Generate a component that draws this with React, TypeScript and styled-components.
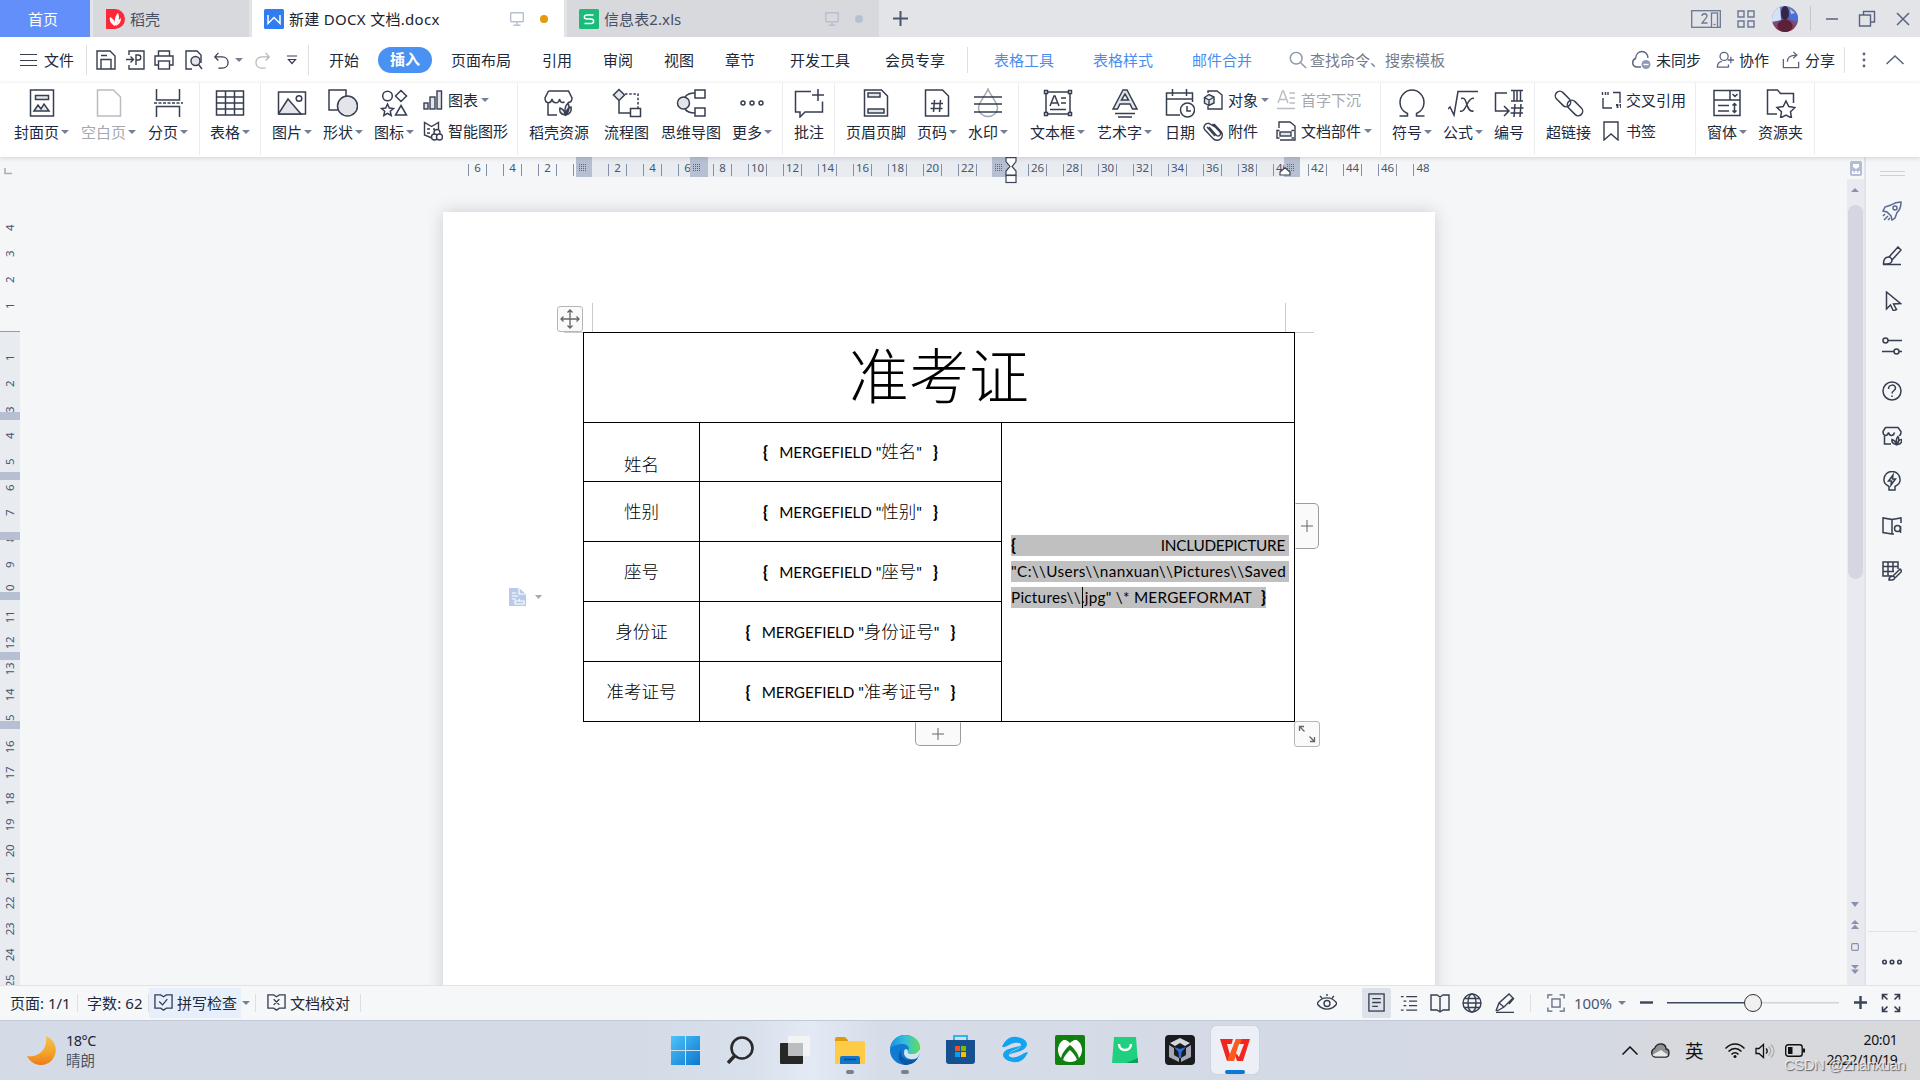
import React from "react";
import styled, { createGlobalStyle } from "styled-components";

const ui = `"Noto Sans", "Noto Sans CJK SC", sans-serif`;
const ink = "#363e50";
const soft = "#e3e5ea";

const Global = createGlobalStyle`
  * { box-sizing: border-box; }
  body { margin: 0; overflow: hidden; background: #f5f6f8; }
  svg { display: block; flex: none; }
`;

/* ---------- icons ---------- */
const leaf = (
  <g fill="#e3e5ea">
    <path d="M21 27c-5-1-6-4-5-7 3 1 5 3 5 7zM22 27c-2-5-1-9 2-12 2 4 1 8-2 12zM22 27c0-5 2-7 5-8 1 4-1 7-5 8z" />
  </g>
);
const icons: Record<string, React.ReactNode> = {
  cover: <><rect x="3.5" y="2" width="23" height="26" /><rect x="8.5" y="7.500" width="13" height="4" fill={soft} /><path d="M7 23l4-6 3 4 3-5 5 7z" fill={soft} /></>,
  blank: <path d="M3.500 2h16l7 7v19h-23z" />,
  pagebreak: <><path d="M3.500 1v11h23V1M3.500 29V18.500h23V29" /><path d="M1 15h29" strokeDasharray="3 1.500" /></>,
  table: <><rect x="1.500" y="3" width="27" height="24" /><path d="M1.500 9h27M1.500 15h27M1.500 21h27M10.500 3v24M19.500 3v24" /></>,
  picture: <><rect x="1.500" y="4" width="27" height="22" /><path d="M2 25l9-14 13 15H2z" fill={soft} /><circle cx="22" cy="10.500" r="2.800" /></>,
  shapes: <><rect x="1" y="2" width="17" height="20" /><circle cx="19.500" cy="18" r="10" fill={soft} /></>,
  glyphs: <><circle cx="8.500" cy="8" r="4.800" /><path d="M22 2.500l5.500 5.500-5.500 5.500L16.500 8zM22 17.500l5.500 9.500h-11zM8.500 16l1.800 4 4.200.5-3.200 2.800.9 4.200-3.700-2.200-3.700 2.200.9-4.200-3.200-2.800 4.200-.5z" /></>,
  shop: <><path d="M13 27H4V14M4.500 3h20l3.500 7c0 3-2 4.500-4 4.500M4.500 3L1 10c0 6 6 6 7 1 1 5 7 5 7.500 0 1 4 3 4 5 3" />{leaf}</>,
  flow: <><path d="M7 1.500l5.500 5.500L7 12.500 1.500 7z" fill={soft} /><path d="M7 13v12h11" /><path d="M13 6h13v14" strokeDasharray="2.500 1.700" /><rect x="18.500" y="20.500" width="10" height="8" fill="#fff" /></>,
  mind: <><circle cx="7.500" cy="15" r="6" fill={soft} /><rect x="19" y="2" width="10" height="8" /><rect x="19" y="20" width="10" height="8" /><path d="M9 9c2-3 5-4 10-4M9 21c2 3 5 4 10 4" /></>,
  more: <><circle cx="6" cy="15" r="2" /><circle cx="15" cy="15" r="2" /><circle cx="24" cy="15" r="2" /></>,
  comment: <path d="M17 3.500H1.500V24H6v5l5-5h17.500V13.500M24 1v12M18 7h12" />,
  header: <><path d="M3.500 2h17l6 6v20h-23z" /><rect x="7" y="5" width="12" height="4" fill={soft} /><rect x="7" y="21" width="16" height="4" fill={soft} /></>,
  pageno: <><path d="M3.500 2h17l6 6v20h-23z" /><path d="M12.500 12l-1 12M18.500 12l-1 12M9 15.500h12M8.500 20.500h12" /></>,
  watermark: <><path d="M15 1C13 7 5.500 14 5.500 20a9.500 8.500 0 0 0 19 0C24.500 14 17 7 15 1z" stroke="#a5a9b3" /><path d="M1 9h28M1 16h28M1 24h28" /></>,
  textbox: <><rect x="3" y="4" width="24" height="22" /><g fill="#fff"><rect x="1.500" y="2.500" width="3" height="3" /><rect x="25.500" y="2.500" width="3" height="3" /><rect x="1.500" y="24.500" width="3" height="3" /><rect x="25.500" y="24.500" width="3" height="3" /></g><path d="M7 18l4-10h1l4 10M8.500 15h6M18 10h5M18 15h5M7 21.500h16" /></>,
  wordart: <><path d="M3 21L13 2h4l10 19h-4.500l-2.500-5H10l-2.500 5zM11.500 12h7L15 6z" fill={soft} /><path d="M5 25.500h20M8 29h14" /></>,
  date: <><path d="M15 27H1.500V5h26v9M1.500 11h26M7.500 1v7M21.500 1v7" /><circle cx="22.500" cy="22" r="7" fill="#fff" /><path d="M22 18v5h4" /></>,
  omega: <path d="M2.500 28h8v-2.500C6 23.500 3 20 3 14.500A12 12.500 0 0 1 27 14.500c0 5.500-3 9-7.500 11V28h8" />,
  sqrt: <><path d="M0 21l2-2 4 8L10 3.500h20" /><path d="M13 10.500c3-1 4 0 5.500 5s3 8.500 7 7.500M26 10.500c-3-1-5 2-7 6s-4 8-7 6.500" /></>,
  number: <><path d="M13 5H1.500v18H14M10 18l5 5-5 5" /><path d="M17 2.500h12M17 13h12M20 2.500V13M23 2.500V13M26.500 2.500V13M21 16l-1 13M27 16l-1 13M17 20h12.500M16.500 25h12.500" /></>,
  link: <><rect x="0" y="6.500" width="18" height="9" rx="4.500" transform="rotate(45 9 11)" /><rect x="12" y="15.500" width="18" height="9" rx="4.500" transform="rotate(45 21 20)" /></>,
  form: <><rect x="2" y="2.500" width="26" height="25" /><path d="M2 12h26M18 2.500V12M20.500 6l2.500 2.500L25.500 6M6 17.500h11M6 23h11M22.500 15.500v9M20.500 17.500l2-2 2 2M20.500 22.500l2 2 2-2" /></>,
  resource: <><path d="M11 26H1.500V2h10l3 3.500h13V15" /><path d="M20 13l2.800 5.600 6.200.9-4.500 4.300 1 6.200-5.500-3-5.500 3 1-6.200-4.500-4.300 6.200-.9z" /></>,
  // small, 20 box
  chart: <g fill={soft}><rect x="1" y="13" width="4" height="6" /><rect x="7" y="7" width="5" height="12" /><rect x="14" y="1" width="4.500" height="18" /></g>,
  smart: <><path d="M9 17L1.500 14V1.500l7 4 7-4V8M4 8h3M10 8h2M4 12h3" /><circle cx="14" cy="11.500" r="3" fill="#fff" /><circle cx="11.500" cy="16" r="3" fill="#fff" /><circle cx="16.500" cy="16" r="3" fill="#fff" /></>,
  object: <><path d="M5 3V1h9l5 4v14H5v-3" /><path d="M1.500 7.500L6 4.500l5 2.500v6L6 15.500l-4.500-2.500zM1.500 7.500L6 10l5-3M6 10v5" fill={soft} /></>,
  clip: <path d="M12 6L6 2.500A4 4 0 0 0 2 9l8 8.500a5.300 5.300 0 0 0 8-7l-7-7.500M6 6l7.500 8.500a2.500 2.500 0 0 0 3.500-3.500L9.500 3M4 6l8 9" />,
  drop: <><path d="M2 13L6.500 1h1L12 13M4 9.500h6M13.500 3H19M13.500 8H19M13.500 13H19M1 18.500h18" /></>,
  parts: <><path d="M3 7V1h11l5 4v14H4" /><rect x="4" y="11" width="11" height="4" fill={soft} /><path d="M3.500 9.500H1v7.500h2.500M15.500 9.500H18M15.500 17H18" /></>,
  cross: <><path d="M2 8v10h9M12 2.500h7V13M1.500 5V2M4.500 5V2M7 5V2" /><path d="M15 15h1.500v3M18.500 15H20v3" strokeWidth="1.800" /></>,
  bookmark: <path d="M3 1h14v18l-7-6-7 6z" />,
  // quick access, 20 box
  save: <><path d="M1 1h13l5 5v13H1z" /><path d="M5 19V9.500h10V19M5 5.500h6" /></>,
  pdf: <><path d="M4 5V1h15v18H4v-4M1 9.500h7M5.500 6.500l3 3-3 3M11 15V5h2.500c3 0 3 5 0 5H11" /></>,
  print: <><path d="M4.500 6V1h11v5M4.500 15H1V6h18v9h-3.500" /><rect x="4.500" y="11" width="11" height="8" fill="#fff" /></>,
  preview: <><path d="M8 19H2V1h11l4 4v8" /><circle cx="11.500" cy="11" r="4.500" fill={soft} /><path d="M14.500 14.500L18 19" /></>,
  undo: <path d="M6 2L2 6.500l4 4M2 6.500h8c9 0 9 12.500 0 12.500H6" />,
  redo: <path d="M14 2l4 4.500-4 4M18 6.500h-8C1 6.500 1 19 10 19h4" />,
  searchI: <><circle cx="8" cy="8" r="6.500" /><path d="M13 13l6 6" /></>,
  cloudOff: <><path d="M10 17H5a4.500 4.500 0 0 1-.5-8.500C5 4 8 1.500 11 1.500S17 4 17 8" /><circle cx="15" cy="14.500" r="4.500" fill="#8d9ab8" stroke="none" /><path d="M12.500 14.500h5" stroke="#fff" /></>,
  collab: <><circle cx="9" cy="6" r="4.500" /><path d="M14 18H1.500c0-4 2-6 5-6.500M14 18c0-1 0-2-.5-3M16.500 6.500v7M13 10h7" /></>,
  share: <path d="M1.500 9v9.500h17V12M6 12c0-5 3-7.500 10-7.500M12.500 1l4 3.500-4 3.500" />,
  // side rail
  rocket: <><path d="M9 4c3-2 6-3 10-3 0 5-1 8-4 10.500L13 17l-3 2-1-4-4-4-4-1 2-4z" /><circle cx="13" cy="7" r="2" /><path d="M1 15l2-2M2 19l4-4M6 19l2-2" /></>,
  brush: <><path d="M7 11L16 1l3 3-9 10M1.500 18c0-5 2-7 5-7s4 3 3 5-4 2-8 2zM1 18.500h18" /></>,
  pointer: <path d="M4.500 1v17l4-4 3 6 3-1.500-3-5.500 7-.5z" />,
  sliders: <><circle cx="3.500" cy="4.500" r="2.500" /><path d="M6 4.500h14M0 15.500h12M17 15.500h3" /><circle cx="14.500" cy="15.500" r="2.500" /></>,
  help: <><circle cx="10" cy="10" r="9" /><path d="M6.500 8c0-5 7-5 7-1 0 3-3.500 2.500-3.500 5.500M10 14.500V16" /></>,
  shopS: <><path d="M9 18H2.500V10M3.500 1.500h12.500l3 4c0 3-1 4-2 4M3.500 1.500L1 5.500c0 5 4.500 5 5.500 1 1 4 5 4 6 0" /><path d="M14 18.500c-4-1-4.500-3-4-5 3 1 4 2 4 5zM15 18.500c-1.500-4-1-6 1-8 1.500 3 1 5.500-1 8zM15.500 18.500c0-3 2-5 4.500-5 0 3-1 4.500-4.500 5z" fill={soft} /></>,
  bulb: <><path d="M7 15.500C3 13.500 1.500 11 2 8a8 7.500 0 0 1 16 0c.5 3-1 5.500-5 7.500V19H7z" /><path d="M11 4L6.500 10H9.500L9 14l4.500-6H10.500z" /></>,
  bookS: <><path d="M10 18L1 16.500V2l9 1.500V18l2 0M10 3.500L19 2v5M10 3.500V18" /><circle cx="15.500" cy="12.500" r="3" /><path d="M18.500 10v7" /></>,
  gridBrush: <><path d="M10 15H1V1h15v7M1 5.500h15M1 10.500h11M6 1v14M11 1v9" /><path d="M11 15l7-7 2 2-7 7M7 19c0-4 5-5 5.500-2.500S10 19 7 19z" /></>,
  dots3: <><circle cx="2.500" cy="10" r="1.800" /><circle cx="10" cy="10" r="1.800" /><circle cx="17.500" cy="10" r="1.800" /></>,
  // status
  spell: <><path d="M1 2h6l3 2 3-2h6v14h-6l-3 2-3-2H1zM5.500 9l3.500 3.500L14 6.500" /></>,
  proof: <><path d="M1 2h6l3 2 3-2h6v14h-6l-3 2-3-2H1zM7 6.500l6 6M13 6.500l-6 6" /></>,
  eye: <><path d="M0 10.500C5 3 15 3 20 10.500 15 18 5 18 0 10.500zM3 3l2 2M17 3l-2 2M10 1v2" /><circle cx="10" cy="10.500" r="3" /></>,
  page: <><rect x="2" y="1" width="16" height="18" /><path d="M5.500 6h9M5.500 10h9M5.500 14h6" /></>,
  outline: <path d="M1 3h3M7 3h12M4 8h3M10 8h9M4 13h3M10 13h9M1 18h3M7 18h12" />,
  read: <path d="M1 2h6l3 2 3-2h6v15h-6l-3 2-3-2H1zM10 4v15" />,
  globe: <><circle cx="10" cy="10" r="9" /><ellipse cx="10" cy="10" rx="4" ry="9" /><path d="M1 10h18M2.500 5.500h15M2.500 14.500h15" /></>,
  pen: <path d="M1 18l3-8L14 1l4 4-9 9-7 4M4 10l5 4M19 5l-5 6M1 19.500h18" />,
  fit: <><path d="M1 5V1h5M14 1h5v4M19 15v4h-5M6 19H1v-4" /><rect x="5.500" y="5.500" width="9" height="9" /></>,
  full: <path d="M1.500 6.500V1.500h5M1.500 1.500l5 5M13.500 1.500h5v5M18.500 1.500l-5 5M1.500 13.500v5h5M1.500 18.500l5-5M18.500 13.500v5h-5M18.500 18.500l-5-5" />,
  monitor: <><rect x="1" y="1" width="18" height="13" rx="1" /><path d="M10 14v5M5 19h10" /></>,
};
const bigIcons = 30;
function Icon({ n, s = 20, c = ink, sw = 1.4 }: { n: string; s?: number; c?: string; sw?: number }) {
  const box = s >= bigIcons ? 30 : 20;
  return (
    <svg width={s} height={s} viewBox={`0 0 ${box} ${box}`} fill="none" stroke={c} strokeWidth={sw}>
      {icons[n]}
    </svg>
  );
}
const Caret = styled.i<{ $ml?: number }>`
  width: 0; height: 0; margin-left: ${p => p.$ml ?? 2}px; flex: none;
  border: 4px solid transparent; border-top: 4px solid #74809a; border-bottom: 0;
`;

/* ---------- shell ---------- */
const Shell = styled.div`
  width: 1920px; height: 1080px; display: flex; flex-direction: column; overflow: hidden;
  font: 15px/20px ${ui}; color: #20283a; background: #f5f6f8; white-space: nowrap;
`;
const TitleBar = styled.header`height: 37px; display: flex; background: #e2e4e8; flex: none;`;
const Tab = styled.div<{ $w: number; $bg: string; $c?: string; $pl: number; $mr?: number }>`
  width: ${p => p.$w}px; margin-right: ${p => p.$mr ?? 3}px; padding-left: ${p => p.$pl}px;
  background: ${p => p.$bg}; color: ${p => p.$c ?? "#454f66"};
  display: flex; align-items: center; padding-top: 1px;
`;
const TabName = styled.span<{ $w: number; $ls?: number }>`width: ${p => p.$w}px; margin-left: 5px; letter-spacing: ${p => p.$ls ?? 0}px;`;
const Dot = styled.i<{ $c: string }>`width: 8px; height: 8px; border-radius: 50%; margin-left: 16px; background: ${p => p.$c};`;
const WinTools = styled.div`margin-left: auto; width: 229px; display: flex; align-items: center;`;
const Gap = styled.i<{ $w: number }>`width: ${p => p.$w}px; flex: none;`;
const Spring = styled.i`flex: 1;`;
const VLine = styled.i<{ $h: number; $c?: string }>`width: 1px; height: ${p => p.$h}px; background: ${p => p.$c ?? "#dcdfe5"}; flex: none;`;

/* ---------- menu ---------- */
const MenuBar = styled.nav`height: 46px; display: flex; align-items: center; background: #fff; flex: none;`;
const MenuItem = styled.span<{ $w: number; $c?: string }>`width: ${p => p.$w}px; flex: none; color: ${p => p.$c ?? "inherit"}; padding-bottom: 1px;`;
const Pill = styled.span`
  width: 54px; height: 26px; line-height: 25px; border-radius: 13px; margin-right: 19px; flex: none;
  text-align: center; color: #fff; background: #4991f2; font-weight: 600;
`;
const Burger = styled.i`width: 17px; height: 12px; margin: 0 7px 0 20px; border-top: 1.5px solid ${ink}; border-bottom: 1.5px solid ${ink}; display: flex; align-items: center;
  &::after { content: ""; width: 100%; height: 1px; background: ${ink}; }`;

/* ---------- ribbon ---------- */
const RibbonBar = styled.section`
  height: 74px; display: flex; background: #fff; flex: none; position: relative; z-index: 2; box-shadow: 0 1px 5px rgba(60,65,80,.2);
`;
const Group = styled.div<{ $w: number; $pl?: number }>`
  width: ${p => p.$w}px; height: 72px; padding-left: ${p => p.$pl ?? 11}px; display: flex; border-right: 1px solid #ebedf0; flex: none;
`;
const Slot = styled.div<{ $w: number }>`width: ${p => p.$w}px; flex: none; display: flex; align-items: flex-start;`;
const Big = styled.div<{ $off?: boolean }>`
  display: flex; flex-direction: column; align-items: center; padding-top: 5px; gap: 3px; color: ${p => (p.$off ? "#a5a8af" : "inherit")};
`;
const Label = styled.span`display: flex; align-items: center; height: 21px;`;
const Stack = styled.div<{ $w: number }>`width: ${p => p.$w}px; display: flex; flex-direction: column; gap: 11px; padding-top: 7px; flex: none; margin-left: -1px; margin-right: 1px;`;
const Small = styled.div<{ $off?: boolean }>`display: flex; align-items: center; height: 20px; gap: 5px; color: ${p => (p.$off ? "#a5a8af" : "inherit")};`;

type BigSpec = [string, string, number, boolean?, boolean?];
const Bigs = ({ items }: { items: BigSpec[] }) => (
  <>
    {items.map(([icon, label, w, caret, off]) => (
      <Slot key={label} $w={w}>
        <Big $off={off}>
          <Icon n={icon} s={30} c={off ? "#b9bcc3" : ink} sw={1.5} />
          <Label>{label}{caret && <Caret />}</Label>
        </Big>
      </Slot>
    ))}
  </>
);
type SmallSpec = [string, string, boolean?, boolean?];
const Smalls = ({ w, items }: { w: number; items: SmallSpec[] }) => (
  <Stack $w={w}>
    {items.map(([icon, label, caret, off]) => (
      <Small key={label} $off={off}><Icon n={icon} c={off ? "#b9bcc3" : ink} /><Label>{label}{caret && <Caret $ml={3} />}</Label></Small>
    ))}
  </Stack>
);

/* ---------- workspace ---------- */
const Main = styled.main`height: 828px; display: flex; flex: none;`;
const Work = styled.div`width: 1847px; display: flex; flex-direction: column;`;
const HRuler = styled.div`
  height: 20px; position: relative; display: flex; padding-left: 460px; flex: none; color: #4a556e; font-size: 11.500px;
  background: linear-gradient(90deg, transparent 576px, #e8ebf0 576px, #e8ebf0 1300px, transparent 1300px);
`;
const HCell = styled.span<{ $last?: boolean }>`
  width: 35px; flex: none; display: flex; justify-content: center;
  b { width: 18.500px; height: 12px; margin-top: 7px; display: flex; justify-content: center; font-weight: 400;
    border: solid #8490a8; border-width: 0 ${p => (p.$last ? 0 : 1)}px 0 1px; line-height: 7px; }
`;
const HBlock = styled.i<{ $x: number; $w: number }>`
  position: absolute; top: 0; left: ${p => p.$x}px; width: ${p => p.$w}px; height: 20px; background: #b7bfd2;
  &::after { content: ""; position: absolute; left: 3px; top: 7px; width: 8px; height: 8px;
    background: repeating-linear-gradient(90deg, #59647f 0 1px, transparent 1px 2px); 
    -webkit-mask: repeating-linear-gradient(#000 0 1px, transparent 1px 2px); }
`;
const Over = styled.div<{ $x: number; $y: number }>`position: absolute; left: ${p => p.$x}px; top: ${p => p.$y}px; z-index: 3;`;
const Body = styled.div`display: flex; height: 808px;`;
const VRuler = styled.div`
  width: 20px; position: relative; padding-top: 38px; overflow: hidden; color: #4a556e; font-size: 11.500px;
  background: linear-gradient(transparent 154px, #8f9bb3 154px, #8f9bb3 155px, #e8ebf0 155px);
`;
const VCell = styled.span`height: 25.960px; width: 20px; flex: none; display: flex; align-items: center; justify-content: center;
  b { font-weight: 400; transform: rotate(-90deg); line-height: 12px; letter-spacing: -.4px; }`;
const VBlock = styled.i<{ $y: number }>`position: absolute; left: 0; top: ${p => p.$y}px; width: 20px; height: 8px; background: #b7bfd2;`;
const Canvas = styled.div`width: 1827px; padding: 35px 0 0 423px; overflow: hidden;`;
const Page = styled.article`
  width: 992px; height: 900px; background: #fff; padding: 120px 0 0 140px; position: relative;
  box-shadow: 0 0 16px rgba(50,52,60,.2);
`;
const Sheet = styled.div`
  width: 712px; height: 390px; display: grid; border: solid #000; border-width: 1px 0 0 1px;
  grid-template-columns: 116px 302px 293px; grid-template-rows: 90px 59px 60px 60px 60px 60px;
  font: 17.500px/24px "Noto Sans CJK SC", sans-serif; font-weight: 300; color: #000;
`;
const Cell = styled.div<{ $dy?: number }>`
  border: solid #000; border-width: 0 1px 1px 0; display: flex; align-items: center; justify-content: center;
  padding-top: ${p => p.$dy ?? 0}px; padding-bottom: ${p => (p.$dy ? 0 : 2)}px;
`;
const FieldCell = styled(Cell)`padding-bottom: 0;`;
const TitleCell = styled(Cell)`grid-column: 1 / 4; font-size: 60px; line-height: 80px; padding: 0 0 9px;`;
const PhotoCell = styled(Cell)`grid-column: 3; grid-row: 2 / 7; flex-direction: column; align-items: flex-start; gap: 5px; padding: 0 0 2px 9px;`;
const Latin = styled.span<{ $ls?: number }>`font: 400 15.300px/21px Lato, "Noto Sans CJK SC", sans-serif; letter-spacing: ${p => p.$ls ?? -0.1}px; white-space: pre;`;
const Cjk = styled.span`font-size: 17.500px; font-weight: 300; letter-spacing: 0;`;
const Brace = styled.b`font: 900 16px/20px Lato, sans-serif;`;
const Field = styled.span<{ $w: number }>`width: ${p => p.$w}px; display: flex; align-items: center; justify-content: space-between;`;
const Sel = styled.div<{ $w: number; $pr?: number }>`
  width: ${p => p.$w}px; height: 21px; padding-right: ${p => p.$pr ?? 0}px; background: #c0c0c0; display: flex; justify-content: space-between; position: relative;
`;
const TextCaret = styled.i`position: absolute; left: 71px; top: 0; width: 1px; height: 21px; background: #000;`;
const Handle = styled.div<{ $x: number; $y: number; $w: number; $h: number; $r?: string }>`
  position: absolute; left: ${p => p.$x}px; top: ${p => p.$y}px; width: ${p => p.$w}px; height: ${p => p.$h}px;
  border: 1.5px solid #b4b6bb; border-radius: ${p => p.$r ?? "3px"}; background: #fafafa; display: flex; align-items: center; justify-content: center;
`;
const EdgeHandle = styled(Handle)<{ $side: "right" | "bottom" }>`
  border-color: #9a9ca1; border-${p => (p.$side === "right" ? "left" : "top")}-color: transparent;
`;
const Guide = styled.i<{ $x: number; $y: number; $w: number; $h: number }>`
  position: absolute; left: ${p => p.$x}px; top: ${p => p.$y}px; width: ${p => p.$w}px; height: ${p => p.$h}px; background: #c9cbd0;
`;

const ScrollCol = styled.div`width: 19px; border-right: 2px solid #e1e4ea; display: flex; flex-direction: column; align-items: center; padding-top: 4px;`;
const Track = styled.div`margin-top: 3px; width: 17px; flex: 1; background: #e8eaf0; display: flex; flex-direction: column; align-items: center; padding: 9px 1px 0 0;`;
const Thumb = styled.div`margin: 13px -1px 0 0; width: 15px; height: 374px; border-radius: 8px; background: #d4d7e0; flex: none;`;
const Rail = styled.aside`width: 54px; display: flex; flex-direction: column; align-items: center; padding: 14px 2px 0 0;`;
const Grip = styled.i`width: 25px; height: 5px; border: solid #cdd0d6; border-width: 1px 0; margin: 0 0 25px 1px; flex: none;`;
const RailIcons = styled.div`display: flex; flex-direction: column; gap: 25px; flex: 1;`;
const RailFoot = styled.div`width: 49px; height: 54px; border-top: 1px solid #dfe2e7; display: flex; justify-content: center; align-items: center; padding-top: 7px;`;

const Status = styled.footer`height: 35px; border-top: 1px solid #dfe2e8; display: flex; align-items: center; background: #f5f7f9; flex: none; padding-bottom: 1px;`;
const StatusText = styled.span<{ $w: number; $ls?: number; $c?: string }>`width: ${p => p.$w}px; flex: none; letter-spacing: ${p => p.$ls ?? 0}px; color: ${p => p.$c ?? "inherit"};`;
const Hot = styled.div`width: 92px; height: 30px; background: #e6effb; display: flex; align-items: center; gap: 4px; padding-left: 5px;`;
const ViewOn = styled.div`width: 29px; height: 30px; background: #dde2ea; display: flex; align-items: center; justify-content: center; border-radius: 2px;`;
const Slider = styled.div`
  width: 172px; height: 16px; display: flex; align-items: center;
  background: linear-gradient(90deg, #3d4960 80px, #cfd3da 80px) center / 100% 1.500px no-repeat;
  &::before { content: ""; width: 16px; height: 16px; margin-left: 77px; border-radius: 50%; border: 1px solid #333; background: #f0f0f0; }
`;

const Taskbar = styled.div`
  height: 60px; display: flex; position: relative; flex: none; border-top: 1px solid #c3c9d8;
  background: linear-gradient(90deg, #d4dbe6 0, #d3dbe7 640px, #d8e0ec 750px, #e3eaf5 810px, #d6dde9 880px, #d3dae5 1300px, #d5d9e4 1580px, #d8d9dd 1700px, #d9d9dc 100%);
`;
const Weather = styled.div`width: 658px; display: flex; align-items: center; padding: 0 0 1px 27px; gap: 10px; font-size: 14.500px;
  p { margin: 0; line-height: 20px; letter-spacing: -.5px; } p + p { color: #4f5560; letter-spacing: 0; }`;
const Pin = styled.div<{ $on?: boolean }>`
  width: 48px; height: 48px; margin: 5px 7px 0 0; border-radius: 5px; display: flex; align-items: center; justify-content: center; position: relative; flex: none;
  background: ${p => (p.$on ? "#eceff6" : "none")}; box-shadow: ${p => (p.$on ? "0 0 1px #9aa" : "none")};
`;
const Run = styled.i<{ $on?: boolean }>`
  position: absolute; bottom: 0; left: 50%; transform: translateX(-50%); height: 4px; border-radius: 2px;
  width: ${p => (p.$on ? 20 : 8)}px; background: ${p => (p.$on ? "#0a78d6" : "#7a7f88")};
`;
const Tray = styled.div`margin-left: auto; width: 298px; display: flex; align-items: center; color: #111;`;
const Ime = styled.span`font-size: 18.500px;`;
const Clock = styled.div`margin-left: 20px; width: 73px; text-align: right; font-size: 14px; letter-spacing: -.35px; padding-bottom: 2px; p { margin: 0; line-height: 20px; }`;
const Mark = styled.div`
  position: absolute; right: 15px; bottom: 5px; font: 15px/20px "Liberation Sans", Arial, sans-serif; color: rgba(238,238,240,.9);
  text-shadow: 1px 1px 1px rgba(70,70,75,.85); letter-spacing: -.55px;
`;

const tabs: [string, number][] = [
  ["页面布局", 91], ["引用", 61], ["审阅", 61], ["视图", 61], ["章节", 65], ["开发工具", 95], ["会员专享", 82],
];
const blue = "#4a8df0";

const MergeField = ({ name, w }: { name: string; w: number }) => (
  <Field $w={w}><Brace>{"{"}</Brace><Latin>{`MERGEFIELD "`}<Cjk>{name}</Cjk>{`"`}</Latin><Brace>{"}"}</Brace></Field>
);

export default function App() {
  return (
    <Shell>
      <Global />
      <TitleBar>
        <Tab $w={90} $bg="#628ffa" $c="#fff" $pl={28}>首页</Tab>
        <Tab $w={156} $bg="#d8d9dc" $pl={13}>
          <svg width="19" height="20" viewBox="0 0 19 20"><path d="M0 0h9a10 10 0 0 1 0 20H0z" fill="#f9293a" /><path d="M9 17C5 15 3 12 4 8c4 2 5 5 5 9zM9 17c-1-5 0-10 3-13 2 5 1 9-3 13zM10 17c2-1 5-3 5-8-3 2-4 5-5 8z" fill="#fff" /></svg>
          <TabName $w={60}>稻壳</TabName>
        </Tab>
        <Tab $w={312} $bg="#fff" $c="#20242e" $pl={12}>
          <svg width="20" height="20"><rect width="20" height="20" rx="1.500" fill="#2f7df0" /><path d="M4 6v8.500l6-6 6 6V6" fill="none" stroke="#fff" strokeWidth="1.500" /></svg>
          <TabName $w={221} $ls={0.3}>新建 DOCX 文档.docx</TabName>
          <Icon n="monitor" s={14} c="#b7bfd2" sw={2} /><Dot $c="#e59a0c" />
        </Tab>
        <Tab $w={312} $bg="#d8d9dc" $pl={12} $mr={14}>
          <svg width="20" height="20"><rect width="20" height="20" rx="1.500" fill="#1abb7b" /><path d="M14.500 6H8C4.500 6 4.500 10 8 10h4c3.500 0 3.500 4.500 0 4.500H5.500" fill="none" stroke="#fff" strokeWidth="1.500" /></svg>
          <TabName $w={221} $ls={0.1}>信息表2.xls</TabName>
          <Icon n="monitor" s={14} c="#b7bfd2" sw={2} /><Dot $c="#b7bfd2" />
        </Tab>
        <svg width="15" height="37"><path d="M0 18.500h15M7.500 11v15" stroke="#4a556e" strokeWidth="2" /></svg>
        <WinTools>
          <svg width="30" height="18" fill="none" stroke="#6c7790" strokeWidth="1.300"><rect x=".7" y=".7" width="28.600" height="16.600" /><rect x="20.500" y="3" width="6" height="14.500" fill="#e2e4e8" /><path d="M11 6c0-3 5-3 5 0 0 2-3 4-5 7h5.500" /><path d="M22.500 14.500h2" /></svg>
          <Gap $w={16} />
          <svg width="18" height="18" fill="none" stroke="#6c7790" strokeWidth="1.400"><path d="M1 1h6v6H1zM11 1h6v6h-6zM1 11h6v6H1zM11 11h6v6h-6z" /></svg>
          <Gap $w={17} />
          <svg width="26" height="26" viewBox="0 0 26 26">
            <defs><clipPath id="av"><circle cx="13" cy="13" r="13" /></clipPath><linearGradient id="avg" x2="0" y2="1"><stop stopColor="#6a80b8" /><stop offset=".5" stopColor="#6a5a9a" /><stop offset="1" stopColor="#a02c35" /></linearGradient></defs>
            <g clipPath="url(#av)"><rect width="26" height="26" fill="url(#avg)" /><path d="M0 4l8-3 1 13-9 2z" fill="#d3e3f7" /><path d="M17 4l9 4v8l-8-3z" fill="#4a70d8" /><path d="M18 3l5 4-4 1z" fill="#b9cdf2" /><ellipse cx="13" cy="7" rx="4" ry="7" fill="#33264a" /><ellipse cx="13" cy="20" rx="7.500" ry="6.500" fill="#5c2138" /></g>
          </svg>
          <Gap $w={12} /><VLine $h={25} $c="#c3c6cd" /><Gap $w={15} />
          <svg width="84" height="18" fill="none" stroke="#59647c" strokeWidth="1.500"><path d="M0 9h12" /><path d="M33.500 5h11v11h-11zM37.500 5V1.500h11V12H45" strokeWidth="1.400" /><path d="M71 3l12 12M83 3L71 15" /></svg>
        </WinTools>
      </TitleBar>

      <MenuBar>
        <Burger /><MenuItem $w={42}>文件</MenuItem><VLine $h={30} /><Gap $w={9} />
        <Icon n="save" /><Gap $w={9} /><Icon n="pdf" /><Gap $w={9} /><Icon n="print" /><Gap $w={10} /><Icon n="preview" /><Gap $w={9} />
        <Icon n="undo" s={18} /><Caret $ml={4} /><Gap $w={10} /><Icon n="redo" s={18} c="#b4b7be" /><Gap $w={16} />
        <svg width="10" height="10" fill="none" stroke={ink}><path d="M0 1h10M1.500 4.500h7L5 8.500z" strokeWidth="1.200" /></svg>
        <Gap $w={11} /><VLine $h={30} /><Gap $w={20} />
        <MenuItem $w={49}>开始</MenuItem><Pill>插入</Pill>
        {tabs.map(([t, w]) => <MenuItem key={t} $w={w}>{t}</MenuItem>)}
        <VLine $h={26} /><Gap $w={26} />
        <MenuItem $w={99} $c={blue}>表格工具</MenuItem><MenuItem $w={99} $c={blue}>表格样式</MenuItem><MenuItem $w={97} $c={blue}>邮件合并</MenuItem>
        <Icon n="searchI" s={18} c="#8c96ad" sw={1.600} /><Gap $w={3} />
        <MenuItem $w={321} $c="#747b8c">查找命令、搜索模板</MenuItem>
        <Icon n="cloudOff" c="#59647c" /><Gap $w={5} /><MenuItem $w={60}>未同步</MenuItem>
        <Icon n="collab" s={18} c="#59647c" /><Gap $w={5} /><MenuItem $w={43}>协作</MenuItem>
        <Icon n="share" s={18} c="#59647c" /><Gap $w={5} /><MenuItem $w={39}>分享</MenuItem>
        <VLine $h={26} /><Gap $w={17} />
        <svg width="4" height="18" fill="#59647c"><circle cx="2" cy="3" r="1.400" /><circle cx="2" cy="9" r="1.400" /><circle cx="2" cy="15" r="1.400" /></svg>
        <Gap $w={20} /><svg width="18" height="10" fill="none" stroke="#59647c" strokeWidth="1.500"><path d="M0.500 9L9 1l8.500 8" /></svg>
      </MenuBar>

      <RibbonBar>
        <Group $w={200} $pl={14}><Bigs items={[["cover", "封面页", 67, true], ["blank", "空白页", 67, true, true], ["pagebreak", "分页", 40, true]]} /></Group>
        <Group $w={61} $pl={10}><Bigs items={[["table", "表格", 40, true]]} /></Group>
        <Group $w={257}><Bigs items={[["picture", "图片", 51, true], ["shapes", "形状", 51, true], ["glyphs", "图标", 50, true]]} />
          <Smalls w={90} items={[["chart", "图表", true], ["smart", "智能图形"]]} /></Group>
        <Group $w={265}><Bigs items={[["shop", "稻壳资源", 75], ["flow", "流程图", 57], ["mind", "思维导图", 71], ["more", "更多", 40, true]]} /></Group>
        <Group $w={52}><Bigs items={[["comment", "批注", 30]]} /></Group>
        <Group $w={184}><Bigs items={[["header", "页眉页脚", 71], ["pageno", "页码", 51, true], ["watermark", "水印", 40, true]]} /></Group>
        <Group $w={362}><Bigs items={[["textbox", "文本框", 67, true], ["wordart", "艺术字", 68, true], ["date", "日期", 39]]} />
          <Smalls w={73} items={[["object", "对象", true], ["clip", "附件"]]} />
          <Smalls w={100} items={[["drop", "首字下沉", false, true], ["parts", "文档部件", true]]} /></Group>
        <Group $w={154}><Bigs items={[["omega", "符号", 51, true], ["sqrt", "公式", 51, true], ["number", "编号", 30]]} /></Group>
        <Group $w={161}><Bigs items={[["link", "超链接", 56]]} /><Smalls w={90} items={[["cross", "交叉引用"], ["bookmark", "书签"]]} /></Group>
        <Group $w={119}><Bigs items={[["form", "窗体", 51, true], ["resource", "资源夹", 45]]} /></Group>
      </RibbonBar>

      <Main>
        <Work>
          <HRuler>
            {Array.from({ length: 28 }, (_, i) => i * 2 - 6).map(n => <HCell key={n} $last={n === 48}><b>{n === 0 || n === 24 ? "" : Math.abs(n)}</b></HCell>)}
            <HBlock $x={576} $w={16} /><HBlock $x={690} $w={18} /><HBlock $x={992} $w={16} /><HBlock $x={1284} $w={16} />
            <Over $x={1005} $y={0}><svg width="12" height="27" fill="#fff" stroke="#3a455c" strokeWidth="1.200"><path d="M1 .6h10v4L7 9.500 11 14v4H1v-4l4-4.500L1 4.600z" /><rect x="1" y="18.500" width="10" height="7" /></svg></Over>
            <Over $x={1279} $y={10}><svg width="12" height="9" fill="#fff" stroke="#3a455c" strokeWidth="1.200"><path d="M1 8V5l5-4.300L11 5v3z" /></svg></Over>
            <Over $x={4} $y={11}><svg width="8" height="7"><path d="M1 0v5.500h7" fill="none" stroke="#a9adb7" strokeWidth="1.600" /></svg></Over>
          </HRuler>
          <Body>
            <VRuler>
              {[4, 3, 2, 1, 0, ...Array.from({ length: 25 }, (_, i) => i + 1)].map((n, i) => <VCell key={i}><b>{n || ""}</b></VCell>)}
              {[235, 295, 355, 415, 475, 544].map(y => <VBlock key={y} $y={y} />)}
            </VRuler>
            <Canvas>
              <Page>
                <Sheet>
                  <TitleCell>准考证</TitleCell>
                  <Cell $dy={24}>姓名</Cell><FieldCell><MergeField name="姓名" w={175} /></FieldCell>
                  <PhotoCell>
                    <Sel $w={278} $pr={4}><Brace>{"{"}</Brace><Latin $ls={-0.25}>INCLUDEPICTURE</Latin></Sel>
                    <Sel $w={278}><Latin $ls={0.37}>{`"C:\\\\Users\\\\nanxuan\\\\Pictures\\\\Saved`}</Latin></Sel>
                    <Sel $w={255}><Latin $ls={0.25}>{`Pictures\\\\.jpg" \\* MERGEFORMAT`}</Latin><Brace>{"}"}</Brace><TextCaret /></Sel>
                  </PhotoCell>
                  <Cell>性别</Cell><FieldCell><MergeField name="性别" w={175} /></FieldCell>
                  <Cell>座号</Cell><FieldCell><MergeField name="座号" w={175} /></FieldCell>
                  <Cell>身份证</Cell><FieldCell><MergeField name="身份证号" w={210} /></FieldCell>
                  <Cell>准考证号</Cell><FieldCell><MergeField name="准考证号" w={210} /></FieldCell>
                </Sheet>
                <Guide $x={149} $y={91} $w={1} $h={29} /><Guide $x={121} $y={120} $w={19} $h={1} />
                <Guide $x={842} $y={91} $w={1} $h={29} /><Guide $x={852} $y={120} $w={19} $h={1} />
                <Handle $x={114} $y={94} $w={26} $h={26}><svg width="20" height="20" fill="none" stroke="#666" strokeWidth="1.300"><path d="M10 1v18M1 10h18M7.500 3.500L10 1l2.500 2.500M7.500 16.500L10 19l2.500-2.500M3.500 7.500L1 10l2.500 2.500M16.500 7.500L19 10l-2.500 2.500" /></svg></Handle>
                <EdgeHandle $side="right" $x={852} $y={291} $w={24} $h={46} $r="0 5px 5px 0"><svg width="12" height="12"><path d="M6 0v12M0 6h12" stroke="#666" /></svg></EdgeHandle>
                <EdgeHandle $side="bottom" $x={472} $y={510} $w={46} $h={24} $r="0 0 5px 5px"><svg width="12" height="12"><path d="M6 0v12M0 6h12" stroke="#666" /></svg></EdgeHandle>
                <Handle $x={851} $y={509} $w={26} $h={26}><svg width="18" height="18" fill="none" stroke="#666" strokeWidth="1.300"><path d="M1.500 6V1.500H6M1.500 1.500l5 5M12 16.500h4.500V12M16.500 16.500l-5-5" /></svg></Handle>
                <Over $x={66} $y={376}><svg width="34" height="19"><path d="M0 0h10l7 6v12H0z" fill="#b9cbe9" /><path d="M10 0v6h7M3 5h4M3 8h6M3 11h4M6 13h9v3H6zM10.500 11v2" fill="none" stroke="#fff" strokeWidth="1.200" /><path d="M26 7h7l-3.500 4z" fill="#a5a8ae" /></svg></Over>
              </Page>
            </Canvas>
          </Body>
        </Work>
        <ScrollCol>
          <svg width="12" height="15"><rect width="12" height="15" rx="2" fill="#b4bdd3" /><path d="M3 3h6v3L6 8 3 6zM2 10h1.500v1.500h1.500V10h2v1.500h1.500V10H10v3H2z" fill="#fff" /></svg>
          <Track>
            <svg width="8" height="4"><path d="M0 4l4-4 4 4z" fill="#8693b0" /></svg>
            <Thumb />
            <Spring />
            <svg width="10" height="84" fill="#8693b0"><path d="M1 1h8L5 6zM5 19l4 4H1zM5 23.500l4 4.500H1zM1 64h8l-4 4zM1 68.500h8l-4 4.500z" /><rect x="1.700" y="42.700" width="6.600" height="6.600" rx="1" fill="none" stroke="#8693b0" strokeWidth="1.200" /></svg>
          </Track>
        </ScrollCol>
        <Rail>
          <Grip />
          <RailIcons>
            {["rocket", "brush", "pointer", "sliders", "help", "shopS", "bulb", "bookS", "gridBrush"].map((n, i) => <Icon key={n} n={n} c={i ? ink : "#5a6a90"} sw={1.500} />)}
          </RailIcons>
          <RailFoot><Icon n="dots3" sw={1.600} /></RailFoot>
        </Rail>
      </Main>

      <Status>
        <Gap $w={10} /><StatusText $w={67} $ls={0}>页面: 1/1</StatusText><VLine $h={18} /><Gap $w={9} />
        <StatusText $w={61} $ls={0.1}>字数: 62</StatusText><VLine $h={18} />
        <Hot><Icon n="spell" s={19} />拼写检查</Hot><Caret $ml={1} /><Gap $w={5} /><VLine $h={18} /><Gap $w={11} />
        <Icon n="proof" s={19} /><Gap $w={4} /><StatusText $w={70}>文档校对</StatusText><VLine $h={18} />
        <Gap $w={956} />
        <Icon n="eye" /><Gap $w={25} /><ViewOn><Icon n="page" s={19} /></ViewOn><Gap $w={9} />
        <Icon n="outline" s={18} /><Gap $w={12} /><Icon n="read" s={20} /><Gap $w={12} /><Icon n="globe" s={20} /><Gap $w={13} /><Icon n="pen" s={20} />
        <Gap $w={15} /><VLine $h={18} /><Gap $w={16} /><Icon n="fit" s={18} c="#59647c" /><Gap $w={9} />
        <StatusText $w={44} $ls={-0.1} $c="#4a556e">100%</StatusText><Caret $ml={0} /><Gap $w={14} />
        <svg width="13" height="13"><path d="M0 6.500h13" stroke="#3a455c" strokeWidth="2.400" /></svg><Gap $w={14} /><Slider /><Gap $w={15} />
        <svg width="13" height="13"><path d="M0 6.500h13M6.500 0v13" stroke="#3a455c" strokeWidth="2.400" /></svg><Gap $w={14} /><Icon n="full" s={20} sw={1.600} />
      </Status>

      <Taskbar>
        <Weather>
          <svg width="29" height="29" viewBox="0 0 29 29"><defs><linearGradient id="mn" x2="0" y2="1"><stop stopColor="#f6c24a" /><stop offset=".6" stopColor="#f3a229" /><stop offset="1" stopColor="#ee7a1c" /></linearGradient></defs><path d="M19 0a15 15 0 1 1-19 20C12 22 21 13 19 0z" fill="url(#mn)" /></svg>
          <div><p>18°C</p><p>晴朗</p></div>
        </Weather>
        <Gap $w={3} />
        <Pin><svg width="29" height="29"><defs><linearGradient id="wn" x2="1" y2="1"><stop stopColor="#4fc3f9" /><stop offset="1" stopColor="#0b78cf" /></linearGradient></defs><path d="M0 0h14v14H0zM15 0h14v14H15zM0 15h14v14H0zM15 15h14v14H15z" fill="url(#wn)" /></svg></Pin>
        <Pin><svg width="28" height="28" fill="none" stroke="#2a2a2c"><circle cx="16" cy="12" r="10.500" strokeWidth="2.600" /><path d="M8.500 20L2 27" strokeWidth="3.400" /></svg></Pin>
        <Pin><svg width="30" height="28"><rect y="7" width="23" height="21" rx="1" fill="#272727" /><rect x="8" width="22" height="20" rx="1" fill="#f3f3f3" /><rect x="8" y="7" width="15" height="13" fill="#bcbdc0" /></svg></Pin>
        <Pin><svg width="30" height="27"><path d="M0 2a2 2 0 0 1 2-2h8l3 3v5H0z" fill="#dd9b0b" /><rect y="4" width="30" height="23" rx="1" fill="#fdcb45" /><path d="M5 27v-6a2 2 0 0 1 2-2h16a2 2 0 0 1 2 2v6z" fill="#1277cb" /><path d="M9 22.500h12" stroke="#0a4c8e" strokeWidth="1.500" /></svg><Run /></Pin>
        <Pin><svg width="30" height="30" viewBox="0 0 30 30"><defs><linearGradient id="eg" x2="1"><stop stopColor="#1c8fdc" /><stop offset=".5" stopColor="#33c0dd" /><stop offset="1" stopColor="#62dd58" /></linearGradient></defs><circle cx="15" cy="15" r="15" fill="#0f7bd3" /><path d="M0 14C1 5 8 0 15 0c9 0 15 6 15 12 0 5-4 7-8 7-3 0-5-1-4-3 2-3 0-7-5-7S2 11 0 14z" fill="url(#eg)" /><path d="M12 14c-3 6 2 12 9 11 3 0 5-1 7-2-3 5-8 7-13 7-6-2-9-9-3-16z" fill="#0c57a3" /><path d="M18 16c-1 2 1 3 4 3s6-1 8-5c1 4-1 6-3 9-6 3-13 0-13-5s3-5 4-2z" fill="#d6e4f2" /></svg><Run /></Pin>
        <Pin><svg width="29" height="30"><path d="M8 6V1h13v5" fill="none" stroke="#2fb4f2" strokeWidth="2" /><path d="M0 5h29v21a3 3 0 0 1-3 3H3a3 3 0 0 1-3-3z" fill="#17508f" /><path d="M9 11h5v5H9z" fill="#f25022" /><path d="M15 11h5v5h-5z" fill="#7fba00" /><path d="M9 17h5v5H9z" fill="#00a4ef" /><path d="M15 17h5v5h-5z" fill="#ffb900" /></svg></Pin>
        <Pin><svg width="28" height="28"><path d="M1 11C4 3 10 0 16 1c8 1 12 6 9 10-3 5-12 5-18 8 4-5 11-5 13-9 1-3-3-4-7-3-5 1-8 5-12 4zM27 16c-3 8-9 11-15 10-8-1-12-6-9-10 3-4 12-4 18-7-4 5-11 5-13 9-1 3 3 4 7 3 5-1 8-5 12-5z" fill="#14a3f0" /></svg></Pin>
        <Pin><svg width="30" height="30"><rect width="30" height="30" rx="2" fill="#118011" /><circle cx="15" cy="15" r="12" fill="#fff" /><path d="M7 5c3-1 6 1 8 3 2-2 5-4 8-3l-1-1C18 2 12 2 8 4zM15 10c5 4 9 10 9 14l-2 1c-1-4-4-7-7-10-3 3-6 6-7 10l-2-1c0-4 4-10 9-14z" fill="#118011" /></svg></Pin>
        <Pin><svg width="26" height="28"><path d="M2 1h22l2 26H0z" fill="#1fd07f" /><path d="M26 22v5H14z" fill="#0c9f62" /><path d="M7 8c0 8 12 8 12 0" fill="none" stroke="#fff" strokeWidth="2.400" /></svg></Pin>
        <Pin><svg width="30" height="30"><rect width="30" height="30" rx="4" fill="#1b1c20" /><path d="M15 3l10 5-5 3-5-3-5 3-5-3z" fill="#d4d7de" /><path d="M4 10l5 3v7l5 3v4L4 22zM26 10l-5 3v7l-5 3v4l10-5z" fill="#a4a9b5" /><path d="M9 12l6 2 6-2-4.500 5-.5 6h-2l-.5-6z" fill="#2c6fe0" /></svg></Pin>
        <Pin $on><svg width="30" height="24"><path d="M0 1h13l-1.500 5H7l3 11 4.500-12L16 1h14l-7 22h-6l-2-6-2 6H7z" fill="#f3251f" /><path d="M16 1h6l-8 22H7z" fill="#ff5a1e" /><path d="M19 6l-3 9 3 4 5-13z" fill="#eceff6" /></svg><Run $on /></Pin>
        <Tray>
          <svg width="16" height="9" fill="none" stroke="#111" strokeWidth="1.500"><path d="M.5 8.500L8 1l7.500 7.500" /></svg><Gap $w={12} />
          <svg width="20" height="15"><path d="M5 14a4.500 4.500 0 0 1-.5-8.500C6 2 9 .7 12 1c3 .5 4 3 4 5 4 0 4 8 0 8z" fill="#8f9194" stroke="#222" strokeWidth="1.300" /><path d="M2 12l9-5 7 5-2 1.500H5z" fill="#e9e9ea" /></svg>
          <Gap $w={15} /><Ime>英</Ime><Gap $w={21} />
          <svg width="20" height="16" fill="none" stroke="#111" strokeWidth="1.500"><path d="M.5 5.500C6-.5 14-.5 19.500 5.500M3.500 8.500c4-4 9-4 13 0M6.500 11.500c2-2.300 5-2.300 7 0" /><circle cx="10" cy="13.500" r="1.500" fill="#111" stroke="none" /></svg><Gap $w={10} />
          <svg width="20" height="16" fill="none" stroke="#111" strokeWidth="1.300"><path d="M1 5.500h3L8.500 1.500v13L4 10.500H1zM11 5.500c1.500 1.500 1.500 3.500 0 5" /><path d="M13.500 3.500c3 3 3 6 0 9M16 1.500c4 4 4 9 0 13" stroke="#aaa" /></svg><Gap $w={10} />
          <svg width="20" height="13"><rect x=".7" y=".7" width="16.500" height="11.600" rx="2.500" fill="none" stroke="#111" strokeWidth="1.400" /><path d="M3 3h4.500v7H3zM18 4.500h2v4h-2z" fill="#111" /></svg>
          <Clock><p>20:01</p><p>2022/10/19</p></Clock>
        </Tray>
        <Mark>CSDN @Zhanxuan</Mark>
      </Taskbar>
    </Shell>
  );
}
